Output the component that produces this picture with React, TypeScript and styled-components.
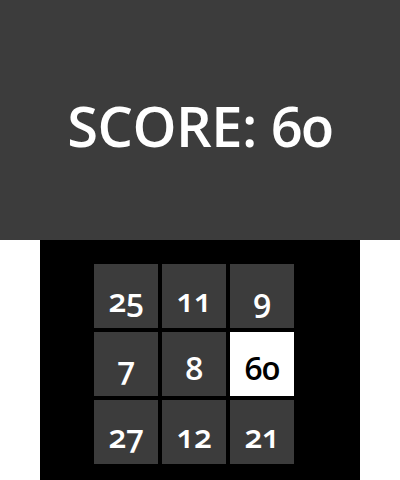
import styled, { createGlobalStyle } from "styled-components";

const GlobalStyle = createGlobalStyle`
  body {
    margin: 0;
    background: #fff;
    font-family: "Open Sans", "Noto Sans", sans-serif;
    font-variant-numeric: oldstyle-nums;
    font-feature-settings: "onum" 1;
  }
`;

const Header = styled.header`
  height: 240px;
  background: #3c3c3c;
  display: flex;
  align-items: center;
  justify-content: center;
`;

const Score = styled.h1`
  margin: 0;
  padding-top: 10px;
  color: #fff;
  font-size: 56px;
  font-weight: 600;
  letter-spacing: -0.5px;
`;

const Board = styled.main`
  margin: 0 40px;
  height: 240px;
  background: #000;
  padding: 24px 0 0 54px;
  box-sizing: border-box;
`;

const Grid = styled.div`
  display: grid;
  grid-template-columns: repeat(3, 64px);
  grid-auto-rows: 64px;
  gap: 4px;
`;

const Tile = styled.div<{ $active?: boolean }>`
  display: flex;
  align-items: center;
  justify-content: center;
  padding-top: 6px;
  box-sizing: border-box;
  background: ${(p) => (p.$active ? "#fff" : "#3c3c3c")};
  color: ${(p) => (p.$active ? "#000" : "#fff")};
  font-size: 32px;
  font-weight: 600;
  letter-spacing: -0.5px;
`;

const tiles = [25, 11, 9, 7, 8, 60, 27, 12, 21];
const score = 60;

const App = () => (
  <>
    <GlobalStyle />
    <Header>
      <Score>SCORE: {score}</Score>
    </Header>
    <Board>
      <Grid>
        {tiles.map((n, idx) => (
          <Tile key={idx} $active={n === score}>
            {n}
          </Tile>
        ))}
      </Grid>
    </Board>
  </>
);

export default App;
